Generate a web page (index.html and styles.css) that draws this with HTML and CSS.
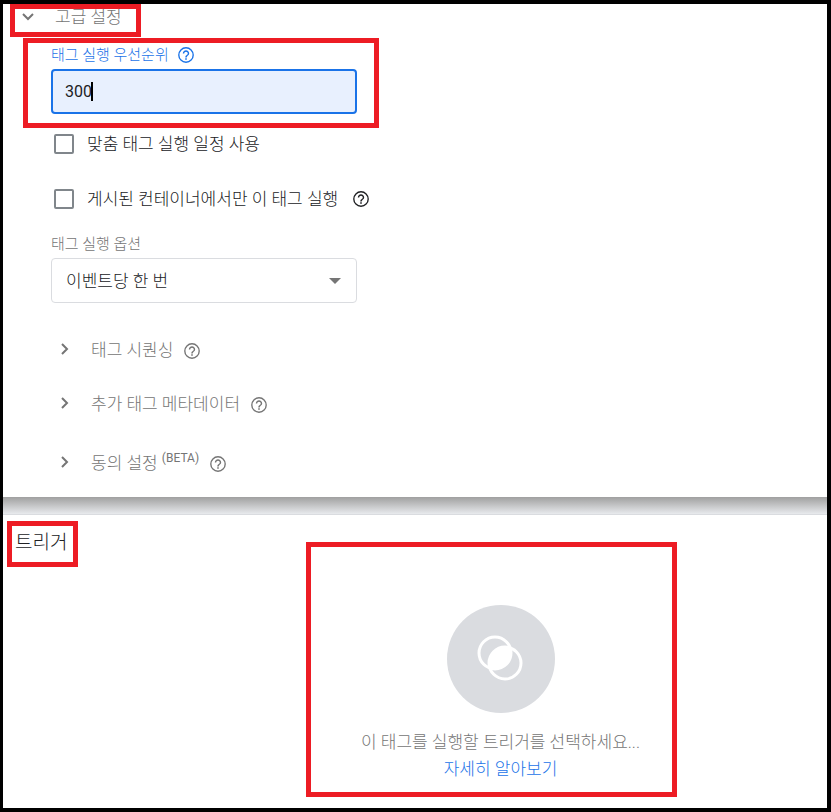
FILE: index.html
```html
<!DOCTYPE html>
<html lang="ko">
  <head>
    <meta charset="UTF-8" />
    <meta name="viewport" content="width=device-width, initial-scale=1" />
    <title>고급 설정</title>
    <link rel="stylesheet" href="styles.css">
  </head>
  <body>
    <!-- shared icons -->
    <svg class="sprite" aria-hidden="true">
      <symbol id="help" viewBox="2 2 20 20">
        <circle cx="12" cy="12" r="9" fill="none" stroke="currentColor" stroke-width="1.7" />
        <path d="M11 18h2v-2h-2v2zm1-12c-2.21 0-4 1.79-4 4h1.8c0-1.2 1-2.2 2.2-2.2s2.2 1 2.2 2.2c0 2-3.1 1.75-3.1 5h1.8c0-2.25 3.1-2.5 3.1-5 0-2.21-1.79-4-4-4z" />
      </symbol>
      <symbol id="chevron" viewBox="0 0 12 12">
        <path d="M3 1l5 5-5 5" fill="none" stroke="currentColor" stroke-width="2" />
      </symbol>
    </svg>

    <main class="page">
      <section class="settings">
        <button class="settings-toggle marked" type="button">
          <svg class="chevron open"><use href="#chevron" /></svg>
          고급 설정
        </button>

        <div class="priority marked">
          <div class="field-label active">
            <label for="priority">태그 실행 우선순위</label>
            <svg class="help"><use href="#help" /></svg>
          </div>
          <div class="input-wrap">
            <input type="text" id="priority" value="300" />
            <span class="caret"></span>
          </div>
        </div>

        <div class="options">
          <div class="check-row">
            <input type="checkbox" id="schedule" />
            <label for="schedule">맞춤 태그 실행 일정 사용</label>
          </div>
          <div class="check-row">
            <input type="checkbox" id="published" />
            <label for="published">게시된 컨테이너에서만 이 태그 실행</label>
            <svg class="help"><use href="#help" /></svg>
          </div>

          <div class="field-label">
            <label for="firing">태그 실행 옵션</label>
          </div>
          <select id="firing">
            <option>이벤트당 한 번</option>
          </select>
        </div>

        <div class="groups">
          <button class="group" type="button">
            <svg class="chevron"><use href="#chevron" /></svg>
            <span>태그 시퀀싱</span>
            <svg class="help"><use href="#help" /></svg>
          </button>
          <button class="group" type="button">
            <svg class="chevron"><use href="#chevron" /></svg>
            <span>추가 태그 메타데이터</span>
            <svg class="help"><use href="#help" /></svg>
          </button>
          <button class="group beta" type="button">
            <svg class="chevron"><use href="#chevron" /></svg>
            <span>동의 설정 <sup>(BETA)</sup></span>
            <svg class="help"><use href="#help" /></svg>
          </button>
        </div>
      </section>

      <div class="divider"></div>

      <section class="trigger">
        <h2 class="marked">트리거</h2>
        <div class="trigger-empty marked">
          <svg class="trigger-icon" viewBox="0 0 108 108">
            <clipPath id="overlap"><circle cx="48" cy="48" r="16" /></clipPath>
            <circle cx="54" cy="54" r="54" fill="#dadce0" />
            <circle cx="58" cy="58" r="16" fill="#fff" clip-path="url(#overlap)" />
            <g fill="none" stroke="#fff" stroke-width="3">
              <circle cx="48" cy="48" r="16" />
              <circle cx="58" cy="58" r="16" />
            </g>
          </svg>
          <p>이 태그를 실행할 트리거를 선택하세요...</p>
          <a href="#">자세히 알아보기</a>
        </div>
      </section>
    </main>
  </body>
</html>
```
FILE: styles.css
```css
* {
  box-sizing: border-box;
}

body {
  margin: 0;
  font-family: Roboto, "Noto Sans CJK KR", sans-serif;
  font-size: 17px;
  font-weight: 300;
  line-height: 24px;
  color: #202124;
}

button,
input,
select {
  font: inherit;
  color: inherit;
}

button {
  border: 0;
  padding: 0;
  background: none;
  text-align: left;
  cursor: pointer;
}

.sprite {
  position: absolute;
  width: 0;
  height: 0;
}

.page {
  min-height: 100vh;
  border: 4px solid #000;
  border-left-width: 3px;
  background: #fff;
}

.marked {
  border: 5px solid #ed1c24;
}

.help {
  flex: none;
  width: 16px;
  height: 16px;
  fill: currentColor;
}

.chevron {
  flex: none;
  width: 12px;
  height: 12px;
}

.chevron.open {
  transform: rotate(90deg);
}

/* advanced settings */
.settings {
  padding-bottom: 22px;
}

.settings-toggle {
  display: flex;
  align-items: center;
  gap: 21px;
  margin-left: 7px;
  padding: 0 14px 7px 7px;
  line-height: 16px;
  color: #757575;
}

.priority {
  width: fit-content;
  margin: 1px 0 0 20px;
  padding: 0 17px 9px 23px;
}

.field-label {
  display: flex;
  align-items: center;
  gap: 9px;
  margin-bottom: 2px;
  font-size: 15px;
  color: #757575;
}

.field-label.active {
  color: #1a73e8;
}

.input-wrap {
  position: relative;
}

.input-wrap input {
  display: block;
  width: 306px;
  height: 45px;
  padding: 0 12px;
  border: 2px solid #1a73e8;
  border-radius: 4px;
  background: #e8f0fe;
  font-size: 16px;
  font-weight: 400;
  outline: none;
}

.caret {
  position: absolute;
  left: 40px;
  top: 13px;
  width: 2px;
  height: 19px;
  background: #000;
}

.options {
  padding: 4px 0 0 48px;
}

.check-row {
  display: flex;
  align-items: center;
  height: 24px;
  margin-bottom: 31px;
}

.check-row input {
  appearance: none;
  width: 20px;
  height: 20px;
  margin: 0 13px 0 3px;
  border: 2px solid #80868b;
  border-radius: 2px;
}

.check-row .help {
  margin-left: 15px;
}

.options .field-label {
  margin-top: -10px;
}

select {
  display: block;
  width: 306px;
  height: 45px;
  padding: 0 14px;
  border: 1px solid #dadce0;
  border-radius: 4px;
  appearance: none;
  background: #fff url("data:image/svg+xml,%3Csvg xmlns='http://www.w3.org/2000/svg' width='12' height='6'%3E%3Cpath d='M0 0h12L6 6z' fill='%23757575'/%3E%3C/svg%3E") no-repeat right 15px center;
}

.groups {
  display: flex;
  flex-direction: column;
  align-items: flex-start;
  gap: 28px;
  padding: 33px 0 0 56px;
}

.group {
  display: flex;
  align-items: center;
  color: #757575;
}

.group span {
  margin: 0 11px 0 20px;
  padding-top: 2px;
}

.group .help {
  margin-top: 3px;
}

.group.beta {
  padding-top: 5px;
}

.group sup {
  font-size: 12px;
  font-weight: 400;
  line-height: 0;
}

.divider {
  height: 18px;
  border-bottom: 1px solid #dadce0;
  background: linear-gradient(#a0a0a0, #e8eaed);
}

/* trigger */
.trigger {
  display: grid;
  grid-template-columns: 299px 371px;
  align-items: start;
  padding: 6px 0 11px 4px;
}

.trigger h2 {
  width: fit-content;
  margin: 0;
  padding: 5px 6px 7px 3px;
  font-size: 19px;
  font-weight: 300;
}

.trigger-empty {
  display: flex;
  flex-direction: column;
  align-items: center;
  margin-top: 21px;
  padding: 58px 0 9px 18px;
  line-height: 27px;
}

.trigger-icon {
  width: 108px;
  height: 108px;
  margin-bottom: 16px;
}

.trigger-empty p {
  margin: 0;
  color: #757575;
}

.trigger-empty a {
  color: #1a73e8;
  text-decoration: none;
}
```
